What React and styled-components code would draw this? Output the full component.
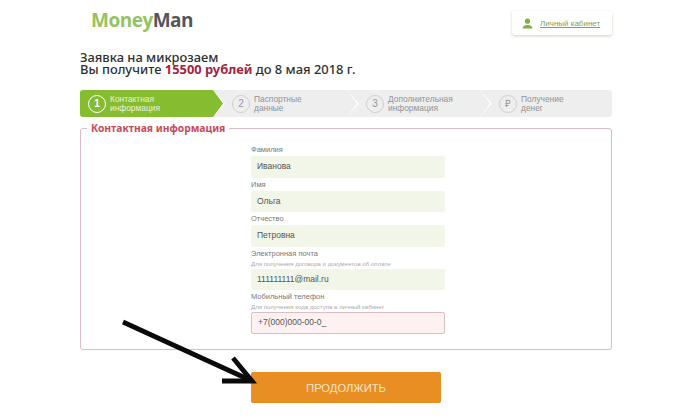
import React from 'react';
import styled, { createGlobalStyle } from 'styled-components';

const GlobalStyle = createGlobalStyle`
  html, body {
    margin: 0;
    padding: 0;
    background: #ffffff;
    font-family: 'Liberation Sans', Arial, sans-serif;
  }
`;

const Page = styled.div`
  position: relative;
  width: 700px;
  height: 418px;
  overflow: hidden;
  padding: 0 88px 0 80px;
  box-sizing: border-box;
`;

const Header = styled.header`
  display: flex;
  justify-content: space-between;
  align-items: flex-start;
  height: 51px;
  padding-top: 11px;
  box-sizing: border-box;
`;

const Logo = styled.div`
  margin: -3px 0 0 11px;
  font-family: 'Open Sans', sans-serif;
  font-weight: 700;
  font-size: 19px;
  line-height: 24px;
  letter-spacing: -0.5px;
  color: #93c463;
  span {
    color: #55565a;
  }
`;

const CabinetLink = styled.a`
  display: flex;
  align-items: center;
  gap: 7px;
  width: 100px;
  height: 24px;
  padding-left: 10px;
  box-sizing: border-box;
  border-radius: 3px;
  background: #ffffff;
  box-shadow: 0 1px 3px rgba(120, 150, 90, 0.4);
  font-size: 8px;
  color: #7f9f63;
  text-decoration: underline;
`;

const Title = styled.h1`
  margin: 0 0 15px;
  font-family: 'Noto Sans', sans-serif;
  font-weight: 500;
  font-size: 12.9px;
  line-height: 12px;
  color: #2f2f2f;
  b {
    font-weight: 700;
    color: #a31f3d;
  }
`;

const Steps = styled.div`
  display: grid;
  grid-template-columns: 133px 134px 133px 132px;
  height: 27px;
  border-radius: 3px;
  overflow: hidden;
  background: #eeeeee;
`;

const Step = styled.div`
  position: relative;
  display: flex;
  align-items: center;
  gap: 4px;
  padding-left: ${p => (p.$active ? '8px' : '19px')};
  background: ${p => (p.$active ? '#86bc2f' : 'transparent')};
  color: ${p => (p.$active ? '#e8f3d6' : '#939393')};
  font-size: 8.4px;
  line-height: 9px;
  &::before,
  &::after {
    content: '';
    position: absolute;
    z-index: 1;
    top: 0;
    height: 27px;
    display: ${p => (p.$last ? 'none' : 'block')};
    clip-path: polygon(0 0, 100% 50%, 0 100%);
  }
  &::before {
    right: -12px;
    width: 12px;
    background: #ffffff;
  }
  &::after {
    right: -10px;
    width: 10px;
    background: ${p => (p.$active ? '#86bc2f' : '#eeeeee')};
  }
`;

const StepNumber = styled.div`
  flex: none;
  display: flex;
  align-items: center;
  justify-content: center;
  width: 18px;
  height: 18px;
  box-sizing: border-box;
  border-radius: 50%;
  border: 1px solid ${p => (p.$active ? '#ffffff' : '#d0d0d0')};
  color: ${p => (p.$active ? '#ffffff' : '#999999')};
  font-size: 10px;
  font-weight: ${p => (p.$active ? 700 : 400)};
`;

const FormBox = styled.fieldset`
  margin: 5px 0 0;
  padding: 0;
  height: 228px;
  box-sizing: border-box;
  border: 1px solid #dcbcc4;
  border-radius: 3px;
  min-width: 0;
`;

const Legend = styled.legend`
  margin-left: 6px;
  padding: 0 4px;
  font-family: 'Noto Sans', sans-serif;
  font-weight: 700;
  font-size: 10.3px;
  line-height: 12px;
  color: #c84a58;
`;

const FormColumn = styled.div`
  width: 194px;
  margin: 10px 0 0 170px;
`;

const Field = styled.div`
  margin-bottom: 1px;
`;

const Label = styled.div`
  font-size: 7.5px;
  line-height: 11px;
  color: #777777;
`;

const Hint = styled.div`
  font-size: 6.1px;
  line-height: 9px;
  color: #aaaaaa;
`;

const Input = styled.div`
  height: 21.5px;
  margin-top: 1px;
  padding: 0 0 1px 6px;
  box-sizing: border-box;
  display: flex;
  align-items: center;
  border-radius: 2px;
  font-size: 8.5px;
  color: #555555;
  background: ${p => (p.$error ? '#fdf2f1' : '#f1f6e9')};
  border: ${p => (p.$error ? '1px solid #dfbcc0' : 'none')};
`;

const SubmitButton = styled.button`
  display: block;
  width: 190px;
  height: 31px;
  margin: 22px 0 0 171px;
  border: none;
  border-radius: 2px;
  background: #e88e23;
  color: #fbe5c8;
  font-family: 'Liberation Sans', Arial, sans-serif;
  font-size: 11.2px;
`;

const Arrow = styled.svg`
  position: absolute;
  left: 115px;
  top: 315px;
`;

const UserIcon = () => (
  <svg width="11" height="11" viewBox="0 0 11 11">
    <circle cx="5.5" cy="3.2" r="2.6" fill="#7cb53a" />
    <path d="M0.5 10.5 C1 7.5 3.5 7 5.5 7 C7.5 7 10 7.5 10.5 10.5 Z" fill="#7cb53a" />
  </svg>
);

const App = () => {
  return (
    <Page>
      <GlobalStyle />
      <Header>
        <Logo>Money<span>Man</span></Logo>
        <CabinetLink href="#"><UserIcon />Личный кабинет</CabinetLink>
      </Header>
      <Title>
        Заявка на микрозаем<br />
        Вы получите <b>15500 рублей</b> до 8 мая 2018 г.
      </Title>
      <Steps>
        <Step $active><StepNumber $active>1</StepNumber><div>Контактная<br />информация</div></Step>
        <Step><StepNumber>2</StepNumber><div>Паспортные<br />данные</div></Step>
        <Step><StepNumber>3</StepNumber><div>Дополнительная<br />информация</div></Step>
        <Step $last><StepNumber>₽</StepNumber><div>Получение<br />денег</div></Step>
      </Steps>
      <FormBox>
        <Legend>Контактная информация</Legend>
        <FormColumn>
          <Field><Label>Фамилия</Label><Input>Иванова</Input></Field>
          <Field><Label>Имя</Label><Input>Ольга</Input></Field>
          <Field><Label>Отчество</Label><Input>Петровна</Input></Field>
          <Field>
            <Label>Электронная почта</Label>
            <Hint>Для получения договора и документов об оплате</Hint>
            <Input>111111111@mail.ru</Input>
          </Field>
          <Field>
            <Label>Мобильный телефон</Label>
            <Hint>Для получения кода доступа в личный кабинет</Hint>
            <Input $error>+7(000)000-00-0_</Input>
          </Field>
        </FormColumn>
      </FormBox>
      <SubmitButton>ПРОДОЛЖИТЬ</SubmitButton>
      <Arrow width="145" height="75" viewBox="0 0 145 75" fill="none" stroke="#0a0a0a" strokeWidth="4.8">
        <path d="M8 7 L137 66" />
        <path d="M118 43 L137 66 L107 66" />
      </Arrow>
    </Page>
  );
};

export default App;
